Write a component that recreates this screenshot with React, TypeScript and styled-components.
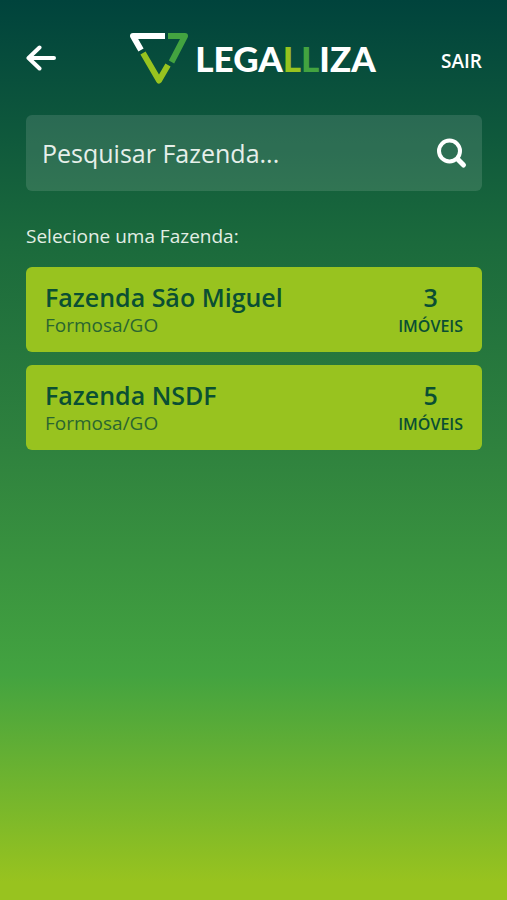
import React, { useState } from "react";
import styled, { createGlobalStyle } from "styled-components";

const colors = {
  deep: "#00433c",
  leaf: "#43a340",
  lime: "#98c31f",
  ink: "#0a4f33",
  inkSoft: "#2a6630",
};

const GlobalStyle = createGlobalStyle`
  *, *::before, *::after { box-sizing: border-box; }
  body { margin: 0; font-family: "Open Sans", "Noto Sans", sans-serif; }
  button, input { font: inherit; color: inherit; border: 0; padding: 0; background: none; }
  button { cursor: pointer; }
`;

const Screen = styled.div`
  min-height: 100vh;
  padding: 28px 25px 28px 26px;
  color: #fff;
  background: linear-gradient(
    to bottom,
    ${colors.deep} 0%,
    #1b6a3c 27%,
    #2f823e 50%,
    ${colors.leaf} 75%,
    ${colors.lime} 98%
  );
`;

const Header = styled.header`
  display: flex;
  align-items: center;
  justify-content: space-between;
  height: 60px;
`;

const BackButton = styled.button`
  display: flex;
  width: 38px;
`;

const Brand = styled.a`
  display: flex;
  align-items: center;
  gap: 6px;
  color: #fff;
  text-decoration: none;
`;

const Wordmark = styled.span`
  font-family: Lato, sans-serif;
  font-size: 35px;
  line-height: 40px;
  font-weight: 900;
`;

const Tint = styled.span<{ $color: string }>`
  color: ${({ $color }) => $color};
`;

const ExitButton = styled.button`
  font-size: 19px;
  line-height: 24px;
  font-weight: 600;
  padding-top: 6px;
`;

const SearchBar = styled.form`
  display: flex;
  align-items: center;
  height: 76px;
  margin-top: 27px;
  padding: 0 14px 0 16px;
  border-radius: 6px;
  background: rgba(255, 255, 255, 0.12);
`;

const SearchInput = styled.input`
  flex: 1;
  min-width: 0;
  height: 100%;
  font-size: 25px;
  outline: none;
  &::placeholder {
    color: #e6efea;
    opacity: 1;
  }
`;

const SearchButton = styled.button`
  display: flex;
`;

const Prompt = styled.h1`
  margin: 33px 0 18px;
  font-size: 19px;
  line-height: 25px;
  font-weight: 400;
  color: #e3eee4;
`;

const FarmList = styled.ul`
  display: grid;
  gap: 13px;
  margin: 0;
  padding: 0;
  list-style: none;
`;

const FarmCard = styled.button`
  display: flex;
  justify-content: space-between;
  align-items: flex-start;
  width: 100%;
  height: 85px;
  padding: 13px 19px;
  border-radius: 6px;
  text-align: left;
  color: ${colors.ink};
  background: ${colors.lime};
`;

const Column = styled.span<{ $centered?: boolean }>`
  display: flex;
  flex-direction: column;
  align-items: ${({ $centered }) => ($centered ? "center" : "flex-start")};
`;

const Strong = styled.span`
  font-size: 25px;
  line-height: 34px;
  font-weight: 600;
`;

const Place = styled.span`
  font-size: 19px;
  line-height: 22px;
  color: ${colors.inkSoft};
`;

const Unit = styled.span`
  font-size: 16px;
  line-height: 24px;
  font-weight: 600;
`;

const farms = [
  { name: "Fazenda São Miguel", place: "Formosa/GO", count: 3 },
  { name: "Fazenda NSDF", place: "Formosa/GO", count: 5 },
];

const ArrowIcon = () => (
  <svg width="31" height="28" viewBox="0 0 31 28" fill="none" stroke="#fff" strokeWidth="4" strokeLinecap="round" strokeLinejoin="round" aria-hidden="true">
    <path d="M28 14H2.500M13.500 3.500L2.500 14L13.500 24.500" />
  </svg>
);

const SearchIcon = () => (
  <svg width="32" height="32" viewBox="0 0 32 32" fill="none" stroke="#fff" aria-hidden="true">
    <circle cx="13.500" cy="14" r="10.500" strokeWidth="4" />
    <path d="M22 22.500L27.500 28" strokeWidth="5" strokeLinecap="round" />
  </svg>
);

const LogoMark = () => (
  <svg width="60" height="54" viewBox="0 0 60 54" fill="none" strokeWidth="6" strokeLinejoin="round" aria-hidden="true">
    <path d="M36 5H4L12 19" stroke="#fff" />
    <path d="M39 5H56L42.500 31" stroke={colors.leaf} />
    <path d="M14 22L30 49.500L39 34" stroke={colors.lime} />
  </svg>
);

export default function App() {
  const [query, setQuery] = useState("");
  const visible = farms.filter((f) => f.name.toLowerCase().includes(query.toLowerCase()));

  return (
    <>
      <GlobalStyle />
      <Screen>
        <Header>
          <BackButton type="button" aria-label="Voltar">
            <ArrowIcon />
          </BackButton>
          <Brand href="#" aria-label="Legalliza">
            <LogoMark />
            <Wordmark>
              LEGA<Tint $color={colors.lime}>L</Tint>
              <Tint $color={colors.leaf}>L</Tint>IZA
            </Wordmark>
          </Brand>
          <ExitButton type="button">SAIR</ExitButton>
        </Header>
        <SearchBar role="search" onSubmit={(e) => e.preventDefault()}>
          <SearchInput
            type="text"
            aria-label="Pesquisar Fazenda"
            placeholder="Pesquisar Fazenda..."
            value={query}
            onChange={(e) => setQuery(e.target.value)}
          />
          <SearchButton type="submit" aria-label="Pesquisar">
            <SearchIcon />
          </SearchButton>
        </SearchBar>
        <main>
          <Prompt>Selecione uma Fazenda:</Prompt>
          <FarmList>
            {visible.map((farm) => (
              <li key={farm.name}>
                <FarmCard type="button">
                  <Column>
                    <Strong>{farm.name}</Strong>
                    <Place>{farm.place}</Place>
                  </Column>
                  <Column $centered>
                    <Strong>{farm.count}</Strong>
                    <Unit>IMÓVEIS</Unit>
                  </Column>
                </FarmCard>
              </li>
            ))}
          </FarmList>
        </main>
      </Screen>
    </>
  );
}
